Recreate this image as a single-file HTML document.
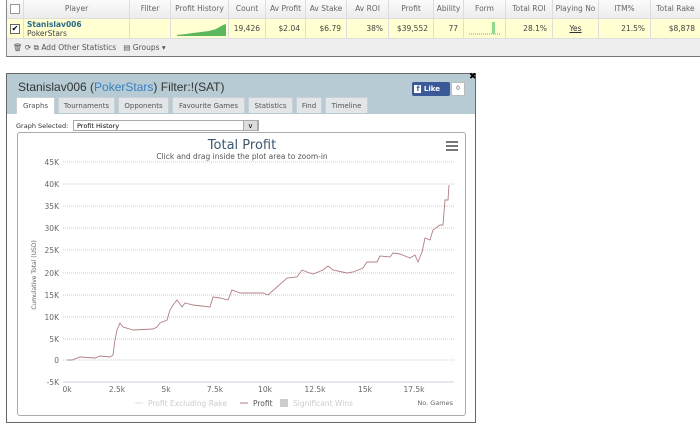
<!DOCTYPE html>
<html><head><style>
body{margin:0;width:700px;height:421px;background:#fff;font-family:"DejaVu Sans","Liberation Sans",sans-serif;position:relative;overflow:hidden}
.a{position:absolute}
.tbl{left:6px;top:0;width:694px;height:56px;border-left:1px solid #888;border-bottom:1px solid #777;background:#eee}
.hd{top:0;height:18px;background:linear-gradient(#fbfbfb,#ececec);border-bottom:1px solid #ddd;width:694px;left:0}
.row{top:19px;height:19px;background:#ffffd2;width:694px;left:0;border-bottom:1px solid #ddd}
.c{position:absolute;font-size:7.5px;color:#666;border-right:1px solid #ddd;height:100%;box-sizing:border-box;text-align:center;line-height:18px;white-space:nowrap;overflow:hidden}
.r{text-align:right;padding-right:5px;color:#444;line-height:19px}
.tab{position:absolute;top:97px;height:16px;background:#e2e6e8;border:1px solid #c8d0d4;border-bottom:none;font-size:7px;color:#555;text-align:center;line-height:16px;box-sizing:border-box}
</style></head><body>
<div class="a tbl">
 <div class="a hd">
  <div class="c" style="left:0;width:17px"><div style="margin:4px auto;width:8px;height:8px;border:1px solid #999;background:#fff"></div></div>
  <div class="c" style="left:17px;width:106px">Player</div>
  <div class="c" style="left:123px;width:41px">Filter</div>
  <div class="c" style="left:164px;width:58px">Profit History</div>
  <div class="c" style="left:222px;width:37px">Count</div>
  <div class="c" style="left:259px;width:40px">Av Profit</div>
  <div class="c" style="left:299px;width:41px">Av Stake</div>
  <div class="c" style="left:340px;width:42px">Av ROI</div>
  <div class="c" style="left:382px;width:45px">Profit</div>
  <div class="c" style="left:427px;width:30px">Ability</div>
  <div class="c" style="left:457px;width:42px">Form</div>
  <div class="c" style="left:499px;width:47px">Total ROI</div>
  <div class="c" style="left:546px;width:46px">Playing No</div>
  <div class="c" style="left:592px;width:52px">ITM%</div>
  <div class="c" style="left:644px;width:50px">Total Rake</div>
 </div>
 <div class="a row">
  <div class="c" style="left:0;width:17px"><div style="margin:5px auto;width:8px;height:8px;border:1px solid #666;background:#fff;font-size:8px;line-height:8px;color:#000">✔</div></div>
  <div class="c" style="left:17px;width:106px;text-align:left;padding-left:3px;line-height:9px;padding-top:1px"><b style="color:#2a6a8a">Stanislav006</b><br><span style="color:#444">PokerStars</span></div>
  <div class="c" style="left:123px;width:41px"></div>
  <div class="c" style="left:164px;width:58px"><svg width="58" height="19" style="position:absolute;left:0;top:0"><polygon points="6,17 6,16 15,15 22,14 30,13 38,12 45,10 52,6 55,5 55,17" fill="#5cb85c"/></svg></div>
  <div class="c r" style="left:222px;width:37px">19,426</div>
  <div class="c r" style="left:259px;width:40px">$2.04</div>
  <div class="c r" style="left:299px;width:41px">$6.79</div>
  <div class="c r" style="left:340px;width:42px">38%</div>
  <div class="c r" style="left:382px;width:45px">$39,552</div>
  <div class="c r" style="left:427px;width:30px">77</div>
  <div class="c" style="left:457px;width:42px"><svg width="42" height="19" style="position:absolute;left:0;top:0"><line x1="5" y1="15" x2="37" y2="15" stroke="#999" stroke-dasharray="1,1"/><rect x="28" y="3" width="3" height="12" fill="#8ddc8d"/></svg></div>
  <div class="c r" style="left:499px;width:47px">28.1%</div>
  <div class="c" style="left:546px;width:46px;line-height:19px;color:#333;text-decoration:underline">Yes</div>
  <div class="c r" style="left:592px;width:52px">21.5%</div>
  <div class="c r" style="left:644px;width:50px">$8,878</div>
 </div>
 <div class="a" style="top:39px;left:6px;font-size:7.5px;color:#555;line-height:17px">🗑 ⟳ ⧉ Add Other Statistics &nbsp; ▤ Groups ▾</div>
</div>

<div class="a" style="left:6px;top:73px;width:470px;height:350px;border:1px solid #666;background:#fff;box-sizing:border-box">
 <div class="a" style="left:0;top:0;width:468px;height:40px;background:#b7cbd5"></div>
 <div class="a" style="left:11px;top:6px;font-family:'Liberation Sans',sans-serif;font-size:12px;color:#333">Stanislav006 (<span style="color:#3a7fc0">PokerStars</span>) Filter:!(SAT)</div>
 <div class="a" style="left:405px;top:8px;width:38px;height:14px;background:#3b5998;color:#fff;font-size:7px;font-weight:bold;line-height:14px;border-radius:2px">&nbsp;<span style="background:#fff;color:#3b5998;padding:0 2px">f</span> Like</div>
 <div class="a" style="left:444px;top:8px;width:12px;height:12px;border:1px solid #bbb;background:#fff;font-size:6px;text-align:center;line-height:12px;color:#555">0</div>
 <div class="a" style="left:462px;top:-2px;font-size:9px;font-weight:bold">✖</div>
</div>
<div class="tab" style="left:16px;width:39px;background:#fff;height:17px">Graphs</div>
<div class="tab" style="left:58px;width:57px">Tournaments</div>
<div class="tab" style="left:118px;width:51px">Opponents</div>
<div class="tab" style="left:172px;width:73px">Favourite Games</div>
<div class="tab" style="left:248px;width:45px">Statistics</div>
<div class="tab" style="left:296px;width:26px">Find</div>
<div class="tab" style="left:325px;width:43px">Timeline</div>
<div class="a" style="left:16px;top:122px;font-size:6.5px;color:#333">Graph Selected:</div>
<div class="a" style="left:73px;top:120px;font-size:6.5px;line-height:10px;padding-left:3px;box-sizing:border-box;width:186px;height:11px;border:1px solid #aaa">Profit History</div>
<div class="a" style="left:243px;top:120px;width:15px;height:11px;background:#ddd;border:1px solid #aaa;box-sizing:border-box;font-size:7px;text-align:center;line-height:10px">v</div>

<div class="a" style="left:17px;top:132px;width:449px;height:284px;border:1px solid #aaa;border-radius:3px;box-sizing:border-box"></div>
<svg class="a" style="left:0;top:0" width="700" height="421" font-family="DejaVu Sans,sans-serif">
 <text x="242" y="149" font-size="13" fill="#3e576f" text-anchor="middle">Total Profit</text>
 <text x="242" y="159" font-size="7.5" fill="#555" text-anchor="middle">Click and drag inside the plot area to zoom-in</text>
 <g stroke="#555" stroke-width="1.6"><line x1="446" y1="142" x2="458" y2="142"/><line x1="446" y1="146" x2="458" y2="146"/><line x1="446" y1="150" x2="458" y2="150"/></g>
 <g stroke="#ccc" stroke-dasharray="1,1">
  <line x1="63" y1="162" x2="454" y2="162"/><line x1="63" y1="184" x2="454" y2="184"/><line x1="63" y1="206" x2="454" y2="206"/><line x1="63" y1="228" x2="454" y2="228"/><line x1="63" y1="250" x2="454" y2="250"/><line x1="63" y1="273" x2="454" y2="273"/><line x1="63" y1="295" x2="454" y2="295"/><line x1="63" y1="317" x2="454" y2="317"/><line x1="63" y1="339" x2="454" y2="339"/><line x1="63" y1="360" x2="454" y2="360"/>
 </g>
 <line x1="63" y1="382" x2="454" y2="382" stroke="#ccd" />
 <g font-size="7.5" fill="#666" text-anchor="end">
  <text x="59" y="165">45K</text><text x="59" y="187">40K</text><text x="59" y="209">35K</text><text x="59" y="231">30K</text><text x="59" y="253">25K</text><text x="59" y="276">20K</text><text x="59" y="298">15K</text><text x="59" y="320">10K</text><text x="59" y="342">5K</text><text x="59" y="363">0</text><text x="59" y="385">-5K</text>
 </g>
 <g font-size="7.5" fill="#666" text-anchor="middle">
  <text x="67" y="392">0k</text><text x="117" y="392">2.5k</text><text x="166" y="392">5k</text><text x="215" y="392">7.5k</text><text x="265" y="392">10k</text><text x="315" y="392">12.5k</text><text x="365" y="392">15k</text><text x="414" y="392">17.5k</text>
 </g>
 <text transform="translate(36,275) rotate(-90)" font-size="6" fill="#666" text-anchor="middle">Cumulative Total (USD)</text>
 <polyline fill="none" stroke="#b37f84" stroke-width="0.9" points="67,360 72,360 80,357 95,358 100,356 110,357 113,355 115,340 117,330 120,323 123,327 133,330 153,329 157,327 160,323 167,320 170,310 173,305 177,300 182,307 185,303 193,305 210,307 213,297 220,298 228,300 232,290 240,293 257,293 263,293 268,295 277,287 287,278 297,277 302,270 307,272 313,274 323,270 328,266 333,270 347,273 353,272 363,268 367,262 377,262 380,256 390,257 393,253 400,254 410,258 415,255 418,262 422,252 425,238 430,240 433,230 440,225 443,225 445,200 448,200 449,185"/>
 <g font-size="7.5">
  <line x1="135" y1="403" x2="143" y2="403" stroke="#ddd"/><text x="148" y="406" fill="#ccc">Profit Excluding Rake</text>
  <line x1="240" y1="403" x2="248" y2="403" stroke="#b37f84"/><text x="253" y="406" fill="#555">Profit</text>
  <rect x="280" y="399" width="8" height="8" fill="#ccc"/><text x="293" y="406" fill="#ccc">Significant Wins</text>
  <text x="453" y="405" fill="#666" text-anchor="end" font-size="6.5">No. Games</text>
 </g>
</svg>
</body></html>
